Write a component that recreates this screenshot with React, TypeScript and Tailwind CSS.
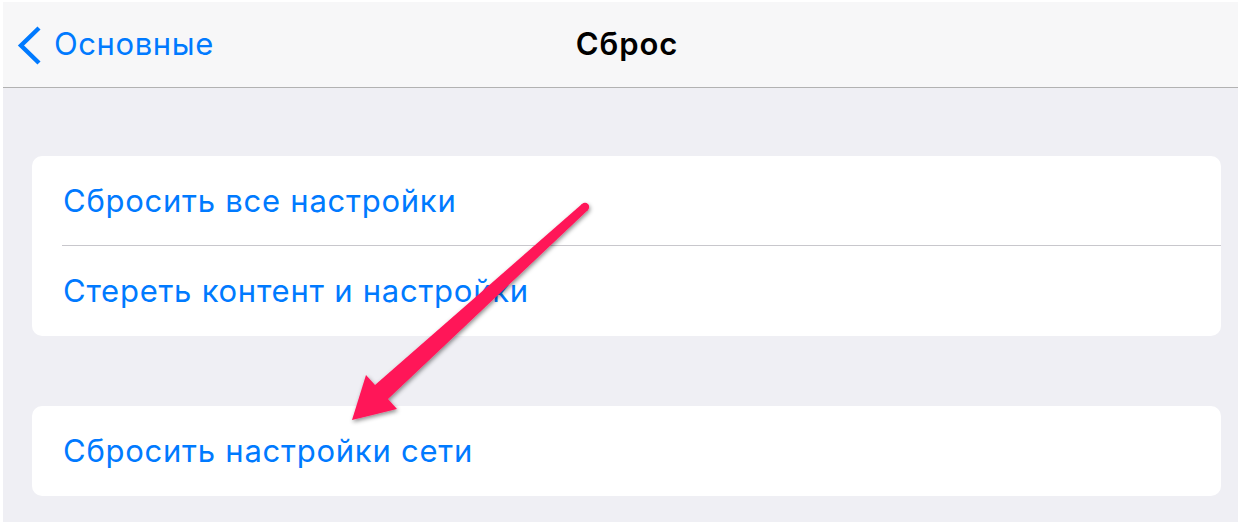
const BLUE = 'text-[#007aff]'

function Row({ label, divider }: { label: string; divider?: boolean }) {
  return (
    <div className="relative flex h-[90px] items-center pl-[31px]">
      <span className={`${BLUE} text-[31px] tracking-[0.75px]`}>{label}</span>
      {divider && <div className="absolute bottom-0 left-[30px] right-0 h-px bg-[#c8c7cc]" />}
    </div>
  )
}

function Arrow() {
  return (
    <svg className="pointer-events-none absolute left-0 top-0" width="1242" height="526" viewBox="0 0 1242 526">
      <defs>
        <filter id="sh" x="-20%" y="-20%" width="140%" height="140%">
          <feDropShadow dx="1" dy="2" stdDeviation="2" floodColor="#000" floodOpacity="0.45" />
        </filter>
      </defs>
      <g filter="url(#sh)" fill="#ff1659">
        <circle cx="585" cy="207" r="4.2" />
        <polygon points="582,204 375,385 366,375 352,420 397,409 388,399 588,210" />
      </g>
    </svg>
  )
}

export default function App() {
  return (
    <div className="relative h-[526px] w-[1242px] bg-white pb-[4px] pl-[3px] pr-[4px] pt-[2px]" style={{ fontFamily: 'Inter, "Noto Sans", sans-serif' }}>
      <div className="flex h-full flex-col bg-[#efeff4]">
        <div className="relative flex h-[86px] items-center border-b border-[#b2b2b2] bg-[#f7f7f8]">
          <div className="flex items-center gap-[10px] pl-[13px]">
            <svg width="28" height="40" viewBox="0 0 28 40">
              <path d="M23 3 L5 20.5 L23 38" fill="none" stroke="#007aff" strokeWidth="4.4" />
            </svg>
            <span className={`${BLUE} text-[31px] tracking-[0.6px]`}>Основные</span>
          </div>
          <div className="absolute inset-0 flex items-center justify-center pl-[13px]">
            <span className="text-[31px] font-semibold tracking-[0.9px] text-black">Сброс</span>
          </div>
        </div>

        <div className="pl-[29px] pr-[17px] pt-[68px]">
          <div className="overflow-hidden rounded-[10px] bg-white">
            <Row label="Сбросить все настройки" divider />
            <Row label="Стереть контент и настройки" />
          </div>
          <div className="mt-[70px] overflow-hidden rounded-[10px] bg-white">
            <Row label="Сбросить настройки сети" />
          </div>
        </div>
      </div>
      <Arrow />
    </div>
  )
}
